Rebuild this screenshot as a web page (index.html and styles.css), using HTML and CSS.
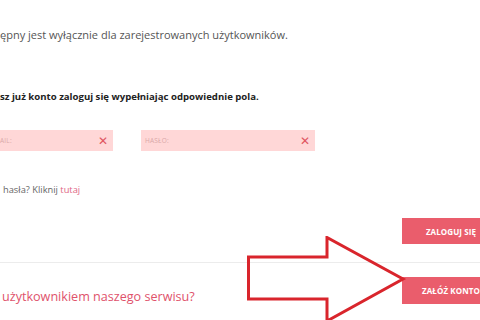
FILE: index.html
```html
<!DOCTYPE html>
<html lang="pl">
<head>
<meta charset="utf-8">
<link rel="stylesheet" href="styles.css">
</head>
<body>
<div class="page">
  <p class="intro">ępny jest wyłącznie dla zarejestrowanych użytkowników.</p>
  <p class="lead">sz już konto zaloguj się wypełniając odpowiednie pola.</p>
  <div class="fields">
    <div class="field field-login"><span class="ph">AIL:</span><span class="x">&#x2715;</span></div>
    <div class="field field-pass"><span class="ph">HASŁO:</span><span class="x">&#x2715;</span></div>
  </div>
  <p class="forgot">hasła? Kliknij <a href="#">tutaj</a></p>
  <div class="row-right">
    <button class="btn">ZALOGUJ SIĘ</button>
  </div>
  <hr class="sep">
  <div class="row-bottom">
    <p class="question">użytkownikiem naszego serwisu?</p>
    <button class="btn">ZAŁÓŻ KONTO</button>
  </div>
  <svg class="arrow" width="170" height="90" viewBox="0 0 170 90">
    <polygon points="1.5,21 80,21 80,1.5 156,43 80,85 80,63 1.5,63" fill="none" stroke="#d9252c" stroke-width="3" stroke-linejoin="miter"/>
  </svg>
</div>
</body>
</html>
```
FILE: styles.css
```css
html, body {
  margin: 0;
  padding: 0;
  background: #fff;
}
body {
  width: 480px;
  height: 320px;
  overflow: hidden;
  font-family: "Open Sans", "Noto Sans", sans-serif;
}
.page {
  position: relative;
  width: 480px;
  height: 320px;
}
p { margin: 0; }
.intro {
  padding-top: 27px;
  font-size: 11px;
  line-height: 16px;
  color: #555;
}
.lead {
  margin-top: 46px;
  font-size: 9.6px;
  line-height: 16px;
  font-weight: 700;
  color: #222;
}
.fields {
  display: flex;
  gap: 28px;
  margin-top: 25px;
}
.field {
  height: 21px;
  background: #ffd7d7;
  display: flex;
  align-items: center;
  justify-content: space-between;
  padding: 0 4px;
  box-sizing: border-box;
}
.field-login { width: 113px; padding-left: 0; }
.field-pass { width: 174px; }
.ph {
  font-size: 6.5px;
  color: #d9a8a8;
  letter-spacing: 0.2px;
}
.x {
  color: #e05560;
  font-size: 12px;
  line-height: 1;
  margin-right: 1px;
}
.forgot {
  margin-top: 32px;
  font-size: 9.3px;
  line-height: 14px;
  color: #666;
  padding-left: 3px;
}
.forgot a {
  color: #e06785;
  text-decoration: none;
}
.row-right {
  display: flex;
  justify-content: flex-end;
  margin-top: 21px;
  margin-right: -20px;
}
.btn {
  width: 98px;
  height: 26px;
  border: 0;
  background: #ea5d6c;
  color: #fff;
  font-family: "Open Sans", "Noto Sans", sans-serif;
  font-weight: 700;
  font-size: 8px;
  padding: 0;
  letter-spacing: 0.1px;
}
.sep {
  margin: 18px 0 0;
  border: 0;
  border-top: 1px solid #ececec;
}
.row-bottom {
  display: flex;
  justify-content: space-between;
  align-items: flex-start;
  margin-top: 14px;
  margin-right: -20px;
}
.question {
  font-size: 12.6px;
  line-height: 18px;
  color: #e0526b;
  padding-left: 2px;
  margin-top: 11px;
}
.row-bottom .btn { height: 27px; }
.arrow {
  position: absolute;
  left: 247px;
  top: 236px;
}
```
